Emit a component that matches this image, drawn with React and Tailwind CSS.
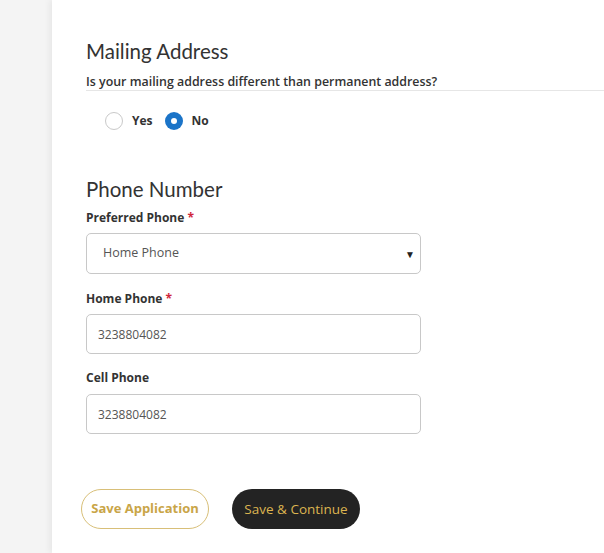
export default function App() {
  const label = "font-['Open_Sans',sans-serif] text-[12px] leading-[16px] font-bold text-[#333]";
  const input =
    "block w-[335px] h-[40px] rounded-[5px] border border-[#c8c8c8] bg-white px-[11px] font-['Open_Sans',sans-serif] text-[12px] text-[#555] outline-none";

  return (
    <div className="min-h-screen flex bg-white">
      <div className="w-[52px] shrink-0 bg-[#f4f4f4]" />
      <div className="flex-1 pl-[34px] pt-[37px] shadow-[-3px_0_6px_rgba(0,0,0,0.05)]">
        <h2 className="font-['Lato',sans-serif] text-[20.5px] leading-[28px] text-[#333]">Mailing Address</h2>
        <p className="mt-[9px] border-b border-[#e6e6e6] font-['Open_Sans',sans-serif] text-[12.4px] leading-[16px] font-semibold text-[#333]">
          Is your mailing address different than permanent address?
        </p>

        <div className="mt-[21px] pl-[19px] flex items-center font-['Open_Sans',sans-serif] text-[12px] font-bold text-[#333]">
          <span className="w-[18px] h-[18px] rounded-full border border-[#c9c9c9] bg-white" />
          <span className="ml-[9px]">Yes</span>
          <span className="ml-[12px] w-[18px] h-[18px] rounded-full bg-[#1b74c8] flex items-center justify-center">
            <span className="w-[6px] h-[6px] rounded-full bg-white" />
          </span>
          <span className="ml-[9px]">No</span>
        </div>

        <h2 className="mt-[45px] font-['Lato',sans-serif] text-[20.5px] leading-[28px] text-[#333]">Phone Number</h2>

        <div className={`mt-[7px] ${label}`}>
          Preferred Phone <span className="text-[#d0263b]">*</span>
        </div>
        <div className="mt-[7px] relative w-[335px] h-[41px] rounded-[5px] border border-[#c8c8c8] flex items-center pl-[16px] font-['Open_Sans',sans-serif] text-[12.5px] text-[#555]">
          Home Phone
          <span className="absolute right-[5px] top-[13px] text-[10px] text-[#222]">▼</span>
        </div>

        <div className={`mt-[17px] ${label}`}>
          Home Phone <span className="text-[#d0263b]">*</span>
        </div>
        <input className={`mt-[7px] ${input}`} defaultValue="3238804082" />

        <div className={`mt-[16px] ${label}`}>Cell Phone</div>
        <input className={`mt-[8px] ${input}`} defaultValue="3238804082" />

        <div className="mt-[55px] ml-[-5px] flex gap-[23px] font-['Open_Sans',sans-serif] text-[13px]">
          <button className="w-[128px] h-[40px] rounded-full border border-[#d8bf78] text-[#c9a548] font-bold">
            Save Application
          </button>
          <button className="w-[128px] h-[40px] rounded-full bg-[#232323] text-[#dcb450] text-[13.5px]">
            Save &amp; Continue
          </button>
        </div>
      </div>
    </div>
  );
}
